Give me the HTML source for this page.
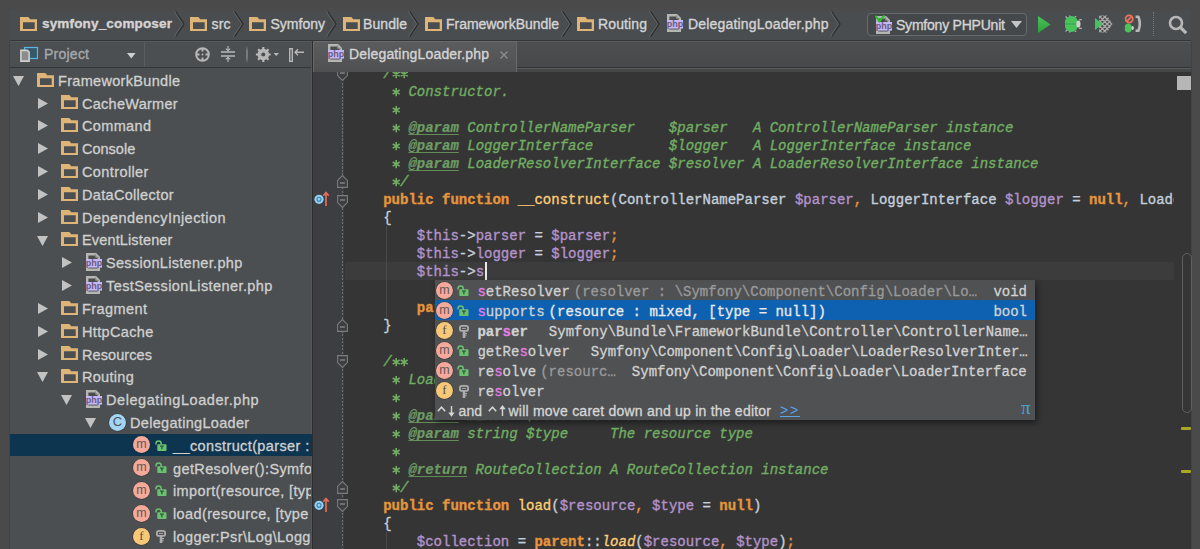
<!DOCTYPE html><html><head><meta charset="utf-8"><style>
*{margin:0;padding:0;box-sizing:border-box}
html,body{width:1200px;height:549px;overflow:hidden;background:#4a4a4a;}
body{position:relative;font-family:"Liberation Sans",sans-serif;}
.a{position:absolute}
svg{position:absolute;overflow:visible}
.nt{position:absolute;font-size:14px;color:#d4d4d4;white-space:pre;line-height:16px;-webkit-text-stroke:0.35px currentColor}
.tt{position:absolute;font-size:14.5px;color:#d0d0d0;white-space:pre;line-height:18px;-webkit-text-stroke:0.3px currentColor}
.code{position:absolute;font-family:"Liberation Mono",monospace;font-size:14px;line-height:18px;white-space:pre;color:#c4d0dc;-webkit-text-stroke:0.35px currentColor}
.k{color:#e5953d;font-weight:bold}
.f{color:#fccd78}
.v{color:#b393cb}
.o{color:#e5953d}
.d{color:#71ae63;font-style:italic}
.dt{color:#6d9c64;font-style:italic;font-weight:bold;text-decoration:underline;text-decoration-color:#628c59;text-decoration-thickness:1.3px;text-underline-offset:1.6px;text-decoration-skip-ink:none;-webkit-text-stroke:0.2px currentColor}
.pt{position:absolute;font-family:"Liberation Mono",monospace;font-size:14px;line-height:20px;white-space:pre;color:#d2d2d2;-webkit-text-stroke:0.3px currentColor}
.hl{color:#e77ee7}
.ast{display:inline-block;width:8.4px;height:18px;vertical-align:top;position:relative}
.ast svg{left:0;top:0}
.gr{color:#9a9a9a}
</style></head><body>
<div class="a" style="left:10px;top:10px;width:1181px;height:30px;background:#4a4d50"></div>
<div class="a" style="left:10px;top:40px;width:1181px;height:1px;background:#343537"></div>
<svg style="left:20px;top:17px" width="17" height="14" viewBox="0 0 17 14"><path fill-rule="evenodd" d="M0 0 H8.3 L10.3 2.2 H17 V14 H0 Z M3 5.2 V12 H14.7 V5.2 Z" fill="#deb477"/></svg>
<div class="nt" style="left:42px;top:16px;font-weight:bold;font-size:13.5px;letter-spacing:0.16px">symfony_composer</div>
<svg style="left:189.5px;top:17px" width="17" height="14" viewBox="0 0 17 14"><path fill-rule="evenodd" d="M0 0 H8.3 L10.3 2.2 H17 V14 H0 Z M3 5.2 V12 H14.7 V5.2 Z" fill="#deb477"/></svg>
<div class="nt" style="left:211.5px;top:16px;letter-spacing:0.16px">src</div>
<svg style="left:249px;top:17px" width="17" height="14" viewBox="0 0 17 14"><path fill-rule="evenodd" d="M0 0 H8.3 L10.3 2.2 H17 V14 H0 Z M3 5.2 V12 H14.7 V5.2 Z" fill="#deb477"/></svg>
<div class="nt" style="left:270.5px;top:16px;letter-spacing:0px">Symfony</div>
<svg style="left:342.5px;top:17px" width="17" height="14" viewBox="0 0 17 14"><path fill-rule="evenodd" d="M0 0 H8.3 L10.3 2.2 H17 V14 H0 Z M3 5.2 V12 H14.7 V5.2 Z" fill="#deb477"/></svg>
<div class="nt" style="left:363px;top:16px;letter-spacing:0.08px">Bundle</div>
<svg style="left:424.5px;top:17px" width="17" height="14" viewBox="0 0 17 14"><path fill-rule="evenodd" d="M0 0 H8.3 L10.3 2.2 H17 V14 H0 Z M3 5.2 V12 H14.7 V5.2 Z" fill="#deb477"/></svg>
<div class="nt" style="left:446px;top:16px;letter-spacing:-0.04px">FrameworkBundle</div>
<svg style="left:576.5px;top:17px" width="17" height="14" viewBox="0 0 17 14"><path fill-rule="evenodd" d="M0 0 H8.3 L10.3 2.2 H17 V14 H0 Z M3 5.2 V12 H14.7 V5.2 Z" fill="#deb477"/></svg>
<div class="nt" style="left:598px;top:16px;letter-spacing:0.12px">Routing</div>
<svg style="left:666.5px;top:14.3px" width="16" height="18" viewBox="0 0 16 18"><path d="M1.2 1.2 H9.6 L12.8 4.4 V16.8 H1.2 Z" fill="#4a4c4e" stroke="#b6b6b2" stroke-width="2.4"/><path d="M9.6 1.2 V4.4 H12.8" fill="none" stroke="#8a8a88" stroke-width="1"/><rect x="0" y="6" width="16" height="8.6" fill="#c6b8f6"/><text x="8" y="12.9" font-family="Liberation Sans" font-size="9" font-weight="bold" fill="#6a5a80" text-anchor="middle">php</text></svg>
<div class="nt" style="left:688px;top:16px;letter-spacing:0.18px">DelegatingLoader.php</div>
<svg style="left:174.7px;top:11px" width="10" height="26" viewBox="0 0 10 26"><path d="M-0.6 0.5 L7.6 13 L-0.6 25.5" fill="none" stroke="#666869" stroke-width="1"/><path d="M0.8 0.5 L9 13 L0.8 25.5" fill="none" stroke="#2b2c2d" stroke-width="1.2"/></svg>
<svg style="left:233.5px;top:11px" width="10" height="26" viewBox="0 0 10 26"><path d="M-0.6 0.5 L7.6 13 L-0.6 25.5" fill="none" stroke="#666869" stroke-width="1"/><path d="M0.8 0.5 L9 13 L0.8 25.5" fill="none" stroke="#2b2c2d" stroke-width="1.2"/></svg>
<svg style="left:326.7px;top:11px" width="10" height="26" viewBox="0 0 10 26"><path d="M-0.6 0.5 L7.6 13 L-0.6 25.5" fill="none" stroke="#666869" stroke-width="1"/><path d="M0.8 0.5 L9 13 L0.8 25.5" fill="none" stroke="#2b2c2d" stroke-width="1.2"/></svg>
<svg style="left:408.8px;top:11px" width="10" height="26" viewBox="0 0 10 26"><path d="M-0.6 0.5 L7.6 13 L-0.6 25.5" fill="none" stroke="#666869" stroke-width="1"/><path d="M0.8 0.5 L9 13 L0.8 25.5" fill="none" stroke="#2b2c2d" stroke-width="1.2"/></svg>
<svg style="left:561.5px;top:11px" width="10" height="26" viewBox="0 0 10 26"><path d="M-0.6 0.5 L7.6 13 L-0.6 25.5" fill="none" stroke="#666869" stroke-width="1"/><path d="M0.8 0.5 L9 13 L0.8 25.5" fill="none" stroke="#2b2c2d" stroke-width="1.2"/></svg>
<svg style="left:649.8px;top:11px" width="10" height="26" viewBox="0 0 10 26"><path d="M-0.6 0.5 L7.6 13 L-0.6 25.5" fill="none" stroke="#666869" stroke-width="1"/><path d="M0.8 0.5 L9 13 L0.8 25.5" fill="none" stroke="#2b2c2d" stroke-width="1.2"/></svg>
<svg style="left:830.7px;top:11px" width="10" height="26" viewBox="0 0 10 26"><path d="M-0.6 0.5 L7.6 13 L-0.6 25.5" fill="none" stroke="#666869" stroke-width="1"/><path d="M0.8 0.5 L9 13 L0.8 25.5" fill="none" stroke="#2b2c2d" stroke-width="1.2"/></svg>
<div class="a" style="left:867px;top:13px;width:160px;height:23px;border:1px solid #686b6e;border-radius:4px;background:#45484b"></div>
<svg style="left:875.7px;top:15.5px" width="16" height="18" viewBox="0 0 16 18"><path d="M1.2 1.2 H9.6 L12.8 4.4 V16.8 H1.2 Z" fill="#4a4c4e" stroke="#b6b6b2" stroke-width="2.4"/><path d="M9.6 1.2 V4.4 H12.8" fill="none" stroke="#8a8a88" stroke-width="1"/><rect x="0" y="6" width="16" height="8.6" fill="#c6b8f6"/><text x="8" y="12.9" font-family="Liberation Sans" font-size="9" font-weight="bold" fill="#6a5a80" text-anchor="middle">php</text></svg>
<svg style="left:874.5px;top:14.5px" width="11" height="8" viewBox="0 0 11 8"><path d="M0.6 0.8 L4.4 6.4 L9.4 0.4" fill="none" stroke="#22c42e" stroke-width="2"/></svg>
<div class="nt" style="left:896px;top:16.5px;letter-spacing:-0.22px">Symfony PHPUnit</div>
<svg style="left:1011px;top:21px" width="11" height="7"><path d="M0 0 H11 L5.5 7 Z" fill="#c4c4c4"/></svg>
<svg style="left:1038px;top:15.5px" width="13" height="17"><defs><linearGradient id="gg" x1="0" y1="0" x2="0" y2="1"><stop offset="0" stop-color="#49c45a"/><stop offset="1" stop-color="#2f9e3e"/></linearGradient></defs><path d="M0 0 L12.5 8.5 L0 17 Z" fill="url(#gg)"/></svg>
<svg style="left:1064px;top:14px" width="20" height="20" viewBox="0 0 20 20"><path d="M3.5 4.5 Q2.5 3 1.5 2.6 M6.5 3.6 L5.5 1.4 M10 4.2 Q11 2.6 12.3 2.2 M3.5 15.5 Q2.5 17 1.5 17.4 M6.5 16.4 L5.5 18.6 M10 15.8 Q11 17.4 12.3 17.8 M15 6 Q16.6 5.2 17.8 5.8 M15 14 Q16.6 14.8 17.8 14.2" fill="none" stroke="#b8b8b8" stroke-width="1.2"/><path d="M1.2 10 A6.4 6 0 0 1 13.6 6.4 V13.6 A6.4 6 0 0 1 1.2 10 Z" fill="#48c25a"/><path d="M1.4 10 H13" stroke="#36964a" stroke-width="0.7"/><ellipse cx="14.4" cy="10" rx="2.1" ry="3.6" fill="#cfcfcf"/></svg>
<svg style="left:1094px;top:15px" width="20" height="18" viewBox="0 0 20 18"><defs><clipPath id="mc"><path d="M5 0.5 H13 L18.5 9 L13 17.5 H5 Z"/></clipPath></defs><g clip-path="url(#mc)" stroke="#a8a8a8" stroke-width="1.3" fill="none"><path d="M-10 18 L8 0 M-5.3 18 L12.7 0 M-0.6 18 L17.4 0 M4.1 18 L22.1 0 M8.8 18 L26.8 0 M-10 0 L8 18 M-5.3 0 L12.7 18 M-0.6 0 L17.4 18 M4.1 0 L22.1 18 M8.8 0 L26.8 18"/></g><path d="M1 3 L8.6 9 L1 15 Z" fill="#45c35a"/></svg>
<svg style="left:1124px;top:14px" width="20" height="20" viewBox="0 0 20 20"><circle cx="5.2" cy="5" r="3.6" fill="none" stroke="#ef735c" stroke-width="1.7"/><path d="M2.6 7.6 L7.8 2.4" stroke="#ef735c" stroke-width="1.7"/><path d="M1 14 A3.4 3.4 0 0 1 7.6 12.2 V16 A3.4 3.4 0 0 1 1 14 Z" fill="#4cc25b"/><ellipse cx="8.6" cy="14" rx="1.3" ry="1.9" fill="#d0d0d0"/><path d="M11.6 2.8 H14.4 Q17.2 9.5 14.4 16.8 H11.6" fill="none" stroke="#b8b8b8" stroke-width="2.6" stroke-linejoin="round"/></svg>
<div class="a" style="left:1153px;top:12px;width:1px;height:24px;border-left:1px dotted #7a7a7a"></div>
<svg style="left:1168px;top:15px" width="20" height="20" viewBox="0 0 20 20"><circle cx="8" cy="8" r="6" fill="none" stroke="#b8b8b8" stroke-width="2.6"/><path d="M12.4 12.4 L18.2 18.2" stroke="#b8b8b8" stroke-width="3.2"/></svg>
<div class="a" style="left:0px;top:41px;width:9px;height:508px;background:#4a4a4b"></div>
<div class="a" style="left:9px;top:41px;width:1px;height:508px;background:#424344"></div>
<div class="a" style="left:10px;top:41px;width:302px;height:508px;background:#4b4f51"></div>
<div class="a" style="left:10px;top:41px;width:302px;height:1px;background:#585b5d"></div>
<div class="a" style="left:10px;top:67px;width:302px;height:1px;background:#343537"></div>
<div class="a" style="left:311px;top:41px;width:1px;height:508px;background:#545658"></div>
<div class="a" style="left:312px;top:41px;width:1px;height:508px;background:#2c2d2e"></div>
<svg style="left:20px;top:46.5px" width="18" height="15" viewBox="0 0 18 15"><rect x="4.5" y="0.5" width="13" height="11" fill="#37596b" stroke="#5ab6e8" stroke-width="1.2"/><path d="M0.9 3.4 H7.4 L9.1 5.1 V14.1 H0.9 Z" fill="#8c8c8c" stroke="#cfcfcf" stroke-width="1.6"/></svg>
<div class="nt" style="left:44px;top:46px;color:#a4a8ac;font-size:14px;letter-spacing:0.24px">Project</div>
<svg style="left:126.5px;top:52.5px" width="9" height="6"><path d="M0 0 H8.6 L4.3 5.4 Z" fill="#cfcfcf"/></svg>
<div class="a" style="left:144px;top:42px;width:1px;height:25px;background:#5a5d60"></div>
<svg style="left:194.5px;top:46.5px" width="15" height="15" viewBox="0 0 15 15"><circle cx="7.5" cy="7.5" r="6.3" fill="none" stroke="#b8b8b8" stroke-width="2"/><path d="M7.5 1 V4.5 M7.5 10.5 V14 M1 7.5 H4.5 M10.5 7.5 H14" stroke="#b8b8b8" stroke-width="2"/><circle cx="7.5" cy="7.5" r="1" fill="#b8b8b8"/></svg>
<svg style="left:221px;top:46px" width="14" height="16" viewBox="0 0 14 16"><path d="M0 6 H14 M0 10 H14" stroke="#b8b8b8" stroke-width="1.5"/><path d="M7 0 V4.5 M4.8 2.6 L7 4.8 L9.2 2.6 M7 16 V11.5 M4.8 13.4 L7 11.2 L9.2 13.4" stroke="#b8b8b8" stroke-width="1.1" fill="none"/></svg>
<div class="a" style="left:245.5px;top:46px;width:2px;height:17px;background:linear-gradient(rgba(120,120,120,0),#7a7a7a 30%,#7a7a7a 70%,rgba(120,120,120,0))"></div>
<svg style="left:255.5px;top:46.5px" width="24" height="15" viewBox="0 0 24 15"><g transform="translate(7.3 7.5)"><circle r="4.4" fill="none" stroke="#b8b8b8" stroke-width="2.8"/><path d="M0 -7.4 V7.4 M-7.4 0 H7.4 M-5.2 -5.2 L5.2 5.2 M5.2 -5.2 L-5.2 5.2" stroke="#b8b8b8" stroke-width="2.2"/><circle r="2" fill="#4b4f51"/></g><path d="M17.5 6 H23 L20.25 9 Z" fill="#b8b8b8"/></svg>
<svg style="left:289px;top:47.5px" width="16" height="14" viewBox="0 0 16 14"><rect x="0.7" y="0.7" width="2.6" height="12.6" fill="none" stroke="#b8b8b8" stroke-width="1.4"/><path d="M6 4.3 H15 M9 1.3 L6 4.3 L9 7.3" stroke="#b8b8b8" stroke-width="1.4" fill="none"/></svg>
<div class="a" style="left:10px;top:433.52px;width:302px;height:22.82px;background:#0e3550"></div>
<div class="a" style="left:0px;top:68px;width:311px;height:481px;overflow:hidden">
<svg style="left:13px;top:7.81px" width="11" height="10"><path d="M0 0 H11 L5.5 10 Z" fill="#c2c2c2"/></svg>
<svg style="left:37px;top:4.61px" width="17" height="14" viewBox="0 0 17 14"><path fill-rule="evenodd" d="M0 0 H8.3 L10.3 2.2 H17 V14 H0 Z M3 5.2 V12 H14.7 V5.2 Z" fill="#deb477"/></svg>
<div class="tt" style="left:58px;top:3.71px;letter-spacing:0.309px">FrameworkBundle</div>
<svg style="left:38px;top:29.63px" width="10" height="11"><path d="M0 0 L10 5.5 L0 11 Z" fill="#c2c2c2"/></svg>
<svg style="left:61px;top:27.43px" width="17" height="14" viewBox="0 0 17 14"><path fill-rule="evenodd" d="M0 0 H8.3 L10.3 2.2 H17 V14 H0 Z M3 5.2 V12 H14.7 V5.2 Z" fill="#deb477"/></svg>
<div class="tt" style="left:82px;top:26.53px;letter-spacing:0.266px">CacheWarmer</div>
<svg style="left:38px;top:52.45px" width="10" height="11"><path d="M0 0 L10 5.5 L0 11 Z" fill="#c2c2c2"/></svg>
<svg style="left:61px;top:50.25px" width="17" height="14" viewBox="0 0 17 14"><path fill-rule="evenodd" d="M0 0 H8.3 L10.3 2.2 H17 V14 H0 Z M3 5.2 V12 H14.7 V5.2 Z" fill="#deb477"/></svg>
<div class="tt" style="left:82px;top:49.35px;letter-spacing:0.352px">Command</div>
<svg style="left:38px;top:75.27px" width="10" height="11"><path d="M0 0 L10 5.5 L0 11 Z" fill="#c2c2c2"/></svg>
<svg style="left:61px;top:73.07px" width="17" height="14" viewBox="0 0 17 14"><path fill-rule="evenodd" d="M0 0 H8.3 L10.3 2.2 H17 V14 H0 Z M3 5.2 V12 H14.7 V5.2 Z" fill="#deb477"/></svg>
<div class="tt" style="left:82px;top:72.17px;letter-spacing:0.0px">Console</div>
<svg style="left:38px;top:98.09px" width="10" height="11"><path d="M0 0 L10 5.5 L0 11 Z" fill="#c2c2c2"/></svg>
<svg style="left:61px;top:95.89px" width="17" height="14" viewBox="0 0 17 14"><path fill-rule="evenodd" d="M0 0 H8.3 L10.3 2.2 H17 V14 H0 Z M3 5.2 V12 H14.7 V5.2 Z" fill="#deb477"/></svg>
<div class="tt" style="left:82px;top:94.99px;letter-spacing:0.393px">Controller</div>
<svg style="left:38px;top:120.91px" width="10" height="11"><path d="M0 0 L10 5.5 L0 11 Z" fill="#c2c2c2"/></svg>
<svg style="left:61px;top:118.71px" width="17" height="14" viewBox="0 0 17 14"><path fill-rule="evenodd" d="M0 0 H8.3 L10.3 2.2 H17 V14 H0 Z M3 5.2 V12 H14.7 V5.2 Z" fill="#deb477"/></svg>
<div class="tt" style="left:82px;top:117.81px;letter-spacing:0.313px">DataCollector</div>
<svg style="left:38px;top:143.73px" width="10" height="11"><path d="M0 0 L10 5.5 L0 11 Z" fill="#c2c2c2"/></svg>
<svg style="left:61px;top:141.53px" width="17" height="14" viewBox="0 0 17 14"><path fill-rule="evenodd" d="M0 0 H8.3 L10.3 2.2 H17 V14 H0 Z M3 5.2 V12 H14.7 V5.2 Z" fill="#deb477"/></svg>
<div class="tt" style="left:82px;top:140.63px;letter-spacing:0.453px">DependencyInjection</div>
<svg style="left:37px;top:167.55px" width="11" height="10"><path d="M0 0 H11 L5.5 10 Z" fill="#c2c2c2"/></svg>
<svg style="left:61px;top:164.35px" width="17" height="14" viewBox="0 0 17 14"><path fill-rule="evenodd" d="M0 0 H8.3 L10.3 2.2 H17 V14 H0 Z M3 5.2 V12 H14.7 V5.2 Z" fill="#deb477"/></svg>
<div class="tt" style="left:82px;top:163.45px;letter-spacing:0.144px">EventListener</div>
<svg style="left:62px;top:189.37px" width="10" height="11"><path d="M0 0 L10 5.5 L0 11 Z" fill="#c2c2c2"/></svg>
<svg style="left:86px;top:185.17px" width="16" height="18" viewBox="0 0 16 18"><path d="M1.2 1.2 H9.6 L12.8 4.4 V16.8 H1.2 Z" fill="#4a4c4e" stroke="#b6b6b2" stroke-width="2.4"/><path d="M9.6 1.2 V4.4 H12.8" fill="none" stroke="#8a8a88" stroke-width="1"/><rect x="0" y="6" width="16" height="8.6" fill="#c6b8f6"/><text x="8" y="12.9" font-family="Liberation Sans" font-size="9" font-weight="bold" fill="#6a5a80" text-anchor="middle">php</text></svg>
<div class="tt" style="left:106px;top:186.27px;letter-spacing:0.311px">SessionListener.php</div>
<svg style="left:62px;top:212.19px" width="10" height="11"><path d="M0 0 L10 5.5 L0 11 Z" fill="#c2c2c2"/></svg>
<svg style="left:86px;top:207.99px" width="16" height="18" viewBox="0 0 16 18"><path d="M1.2 1.2 H9.6 L12.8 4.4 V16.8 H1.2 Z" fill="#4a4c4e" stroke="#b6b6b2" stroke-width="2.4"/><path d="M9.6 1.2 V4.4 H12.8" fill="none" stroke="#8a8a88" stroke-width="1"/><rect x="0" y="6" width="16" height="8.6" fill="#c6b8f6"/><text x="8" y="12.9" font-family="Liberation Sans" font-size="9" font-weight="bold" fill="#6a5a80" text-anchor="middle">php</text></svg>
<div class="tt" style="left:106px;top:209.09px;letter-spacing:0.419px">TestSessionListener.php</div>
<svg style="left:38px;top:235.01px" width="10" height="11"><path d="M0 0 L10 5.5 L0 11 Z" fill="#c2c2c2"/></svg>
<svg style="left:61px;top:232.81px" width="17" height="14" viewBox="0 0 17 14"><path fill-rule="evenodd" d="M0 0 H8.3 L10.3 2.2 H17 V14 H0 Z M3 5.2 V12 H14.7 V5.2 Z" fill="#deb477"/></svg>
<div class="tt" style="left:82px;top:231.91px;letter-spacing:0.42px">Fragment</div>
<svg style="left:38px;top:257.83px" width="10" height="11"><path d="M0 0 L10 5.5 L0 11 Z" fill="#c2c2c2"/></svg>
<svg style="left:61px;top:255.63px" width="17" height="14" viewBox="0 0 17 14"><path fill-rule="evenodd" d="M0 0 H8.3 L10.3 2.2 H17 V14 H0 Z M3 5.2 V12 H14.7 V5.2 Z" fill="#deb477"/></svg>
<div class="tt" style="left:82px;top:254.73px;letter-spacing:0.348px">HttpCache</div>
<svg style="left:38px;top:280.65px" width="10" height="11"><path d="M0 0 L10 5.5 L0 11 Z" fill="#c2c2c2"/></svg>
<svg style="left:61px;top:278.45px" width="17" height="14" viewBox="0 0 17 14"><path fill-rule="evenodd" d="M0 0 H8.3 L10.3 2.2 H17 V14 H0 Z M3 5.2 V12 H14.7 V5.2 Z" fill="#deb477"/></svg>
<div class="tt" style="left:82px;top:277.55px;letter-spacing:0.086px">Resources</div>
<svg style="left:37px;top:304.47px" width="11" height="10"><path d="M0 0 H11 L5.5 10 Z" fill="#c2c2c2"/></svg>
<svg style="left:61px;top:301.27px" width="17" height="14" viewBox="0 0 17 14"><path fill-rule="evenodd" d="M0 0 H8.3 L10.3 2.2 H17 V14 H0 Z M3 5.2 V12 H14.7 V5.2 Z" fill="#deb477"/></svg>
<div class="tt" style="left:82px;top:300.37px;letter-spacing:0.286px">Routing</div>
<svg style="left:61px;top:327.29px" width="11" height="10"><path d="M0 0 H11 L5.5 10 Z" fill="#c2c2c2"/></svg>
<svg style="left:86px;top:322.09px" width="16" height="18" viewBox="0 0 16 18"><path d="M1.2 1.2 H9.6 L12.8 4.4 V16.8 H1.2 Z" fill="#4a4c4e" stroke="#b6b6b2" stroke-width="2.4"/><path d="M9.6 1.2 V4.4 H12.8" fill="none" stroke="#8a8a88" stroke-width="1"/><rect x="0" y="6" width="16" height="8.6" fill="#c6b8f6"/><text x="8" y="12.9" font-family="Liberation Sans" font-size="9" font-weight="bold" fill="#6a5a80" text-anchor="middle">php</text></svg>
<div class="tt" style="left:106px;top:323.19px;letter-spacing:0.563px">DelegatingLoader.php</div>
<svg style="left:85px;top:350.11px" width="11" height="10"><path d="M0 0 H11 L5.5 10 Z" fill="#c2c2c2"/></svg>
<div class="a" style="left:109px;top:345.51px;width:17px;height:17px;border-radius:50%;background:#a2d5f4;box-shadow:0 0 0 0.6px rgba(30,30,30,0.5);color:#4d5258;font-size:13px;line-height:16px;text-align:center;">C</div>
<div class="tt" style="left:130px;top:346.01px;letter-spacing:0.314px">DelegatingLoader</div>
<div class="a" style="left:133px;top:368.33px;width:17px;height:17px;border-radius:50%;background:#f4a99b;box-shadow:0 0 0 0.6px rgba(30,30,30,0.5);color:#665754;font-size:12.5px;line-height:16px;text-align:center;">m</div>
<svg style="left:155px;top:371.63px" width="12" height="11" viewBox="0 0 12 11"><path d="M1 4.5 V3.5 A2.6 2.6 0 0 1 6.2 3.5 V5" fill="none" stroke="#6cc072" stroke-width="1.5"/><rect x="2.3" y="4.2" width="9.2" height="6.8" rx="0.8" fill="#6cc072"/><path d="M5 6.2 H8.8 M6.9 6.2 V9.2" stroke="#2f5a34" stroke-width="1.3"/></svg>
<div class="tt" style="left:173px;top:368.83px;letter-spacing:0.38px">__construct(parser : ControllerNameParser</div>
<div class="a" style="left:133px;top:391.15px;width:17px;height:17px;border-radius:50%;background:#f4a99b;box-shadow:0 0 0 0.6px rgba(30,30,30,0.5);color:#665754;font-size:12.5px;line-height:16px;text-align:center;">m</div>
<svg style="left:155px;top:394.45px" width="12" height="11" viewBox="0 0 12 11"><path d="M1 4.5 V3.5 A2.6 2.6 0 0 1 6.2 3.5 V5" fill="none" stroke="#6cc072" stroke-width="1.5"/><rect x="2.3" y="4.2" width="9.2" height="6.8" rx="0.8" fill="#6cc072"/><path d="M5 6.2 H8.8 M6.9 6.2 V9.2" stroke="#2f5a34" stroke-width="1.3"/></svg>
<div class="tt" style="left:173px;top:391.65px;letter-spacing:0.38px">getResolver():Symfony\Component</div>
<div class="a" style="left:133px;top:413.97px;width:17px;height:17px;border-radius:50%;background:#f4a99b;box-shadow:0 0 0 0.6px rgba(30,30,30,0.5);color:#665754;font-size:12.5px;line-height:16px;text-align:center;">m</div>
<svg style="left:155px;top:417.27px" width="12" height="11" viewBox="0 0 12 11"><path d="M1 4.5 V3.5 A2.6 2.6 0 0 1 6.2 3.5 V5" fill="none" stroke="#6cc072" stroke-width="1.5"/><rect x="2.3" y="4.2" width="9.2" height="6.8" rx="0.8" fill="#6cc072"/><path d="M5 6.2 H8.8 M6.9 6.2 V9.2" stroke="#2f5a34" stroke-width="1.3"/></svg>
<div class="tt" style="left:173px;top:414.47px;letter-spacing:0.38px">import(resource, [type = null])</div>
<div class="a" style="left:133px;top:436.79px;width:17px;height:17px;border-radius:50%;background:#f4a99b;box-shadow:0 0 0 0.6px rgba(30,30,30,0.5);color:#665754;font-size:12.5px;line-height:16px;text-align:center;">m</div>
<svg style="left:155px;top:440.09px" width="12" height="11" viewBox="0 0 12 11"><path d="M1 4.5 V3.5 A2.6 2.6 0 0 1 6.2 3.5 V5" fill="none" stroke="#6cc072" stroke-width="1.5"/><rect x="2.3" y="4.2" width="9.2" height="6.8" rx="0.8" fill="#6cc072"/><path d="M5 6.2 H8.8 M6.9 6.2 V9.2" stroke="#2f5a34" stroke-width="1.3"/></svg>
<div class="tt" style="left:173px;top:437.29px;letter-spacing:0.38px">load(resource, [type = null])</div>
<div class="a" style="left:133px;top:459.61px;width:17px;height:17px;border-radius:50%;background:#f7c878;box-shadow:0 0 0 0.6px rgba(30,30,30,0.5);color:#5a5040;font-size:13px;line-height:16px;text-align:center;font-family:Liberation Serif;">f</div>
<svg style="left:156px;top:461.71px" width="10" height="14" viewBox="0 0 10 14"><rect x="0.9" y="0.9" width="8.2" height="5" rx="2" fill="#4f5153" stroke="#acacac" stroke-width="1.8"/><path d="M3 3.4 H7" stroke="#acacac" stroke-width="1"/><path d="M5 5.5 V13" stroke="#acacac" stroke-width="2.6"/><path d="M6 8.6 H8 M6 10.8 H7.6" stroke="#acacac" stroke-width="1.1"/></svg>
<div class="tt" style="left:173px;top:460.11px;letter-spacing:0.38px">logger:Psr\Log\LoggerInterface</div>
</div>
<div class="a" style="left:313px;top:41px;width:878px;height:31px;background:linear-gradient(#4d4e4f,#474849)"></div>
<div class="a" style="left:313px;top:41px;width:878px;height:1px;background:#5a5c5e"></div>
<div class="a" style="left:313px;top:67px;width:878px;height:1px;background:#343537"></div>
<div class="a" style="left:313px;top:68px;width:878px;height:1px;background:#5a5c5e"></div>
<div class="a" style="left:313px;top:69px;width:878px;height:3px;background:#454646"></div>
<div class="a" style="left:313px;top:41px;width:204px;height:31px;background:linear-gradient(#5b5c5d,#4f5051);border:1px solid #686a6c;border-bottom:none"></div>
<svg style="left:328px;top:44.2px" width="16" height="18" viewBox="0 0 16 18"><path d="M1.2 1.2 H9.6 L12.8 4.4 V16.8 H1.2 Z" fill="#4a4c4e" stroke="#b6b6b2" stroke-width="2.4"/><path d="M9.6 1.2 V4.4 H12.8" fill="none" stroke="#8a8a88" stroke-width="1"/><rect x="0" y="6" width="16" height="8.6" fill="#c6b8f6"/><text x="8" y="12.9" font-family="Liberation Sans" font-size="9" font-weight="bold" fill="#6a5a80" text-anchor="middle">php</text></svg>
<div class="nt" style="left:349px;top:46px;letter-spacing:0.16px">DelegatingLoader.php</div>
<svg style="left:499.5px;top:50.5px" width="8" height="8"><path d="M0.5 0.5 L7.5 7.5 M7.5 0.5 L0.5 7.5" stroke="#8e8e8e" stroke-width="1.3"/></svg>
<div class="a" style="left:313px;top:72px;width:878px;height:477px;background:#353535"></div>
<div class="a" style="left:313px;top:72px;width:31px;height:477px;background:#3d3e41"></div>
<div class="a" style="left:345px;top:262px;width:829px;height:18px;background:#3c3c3c"></div>
<div class="a" style="left:1191px;top:41px;width:9px;height:508px;background:#4a4a4a"></div>
<div class="a" style="left:1191px;top:41px;width:1px;height:508px;background:#434343"></div>
<div class="a" style="left:342px;top:72px;width:1.2px;height:477px;background:repeating-linear-gradient(#707070 0 2px,transparent 2px 3.5px)"></div>
<div class="a" style="left:386px;top:226px;width:1px;height:91px;background:#4a4a4a"></div>
<div class="a" style="left:386px;top:532px;width:1px;height:17px;background:#4a4a4a"></div>
<div class="a" style="left:0;top:72px;width:1200px;height:477px;overflow:hidden">
<svg style="left:337px;top:-4px" width="11" height="13" viewBox="0 0 11 13"><path d="M0.6 0.6 H10.4 V7.6 L5.5 12.4 L0.6 7.6 Z" fill="#3d3e41" stroke="#7c7c7c" stroke-width="1.1"/><path d="M3 5 H8" stroke="#8c8c8c" stroke-width="1.3"/></svg>
<svg style="left:337px;top:103px" width="11" height="13" viewBox="0 0 11 13"><path d="M0.6 12.4 H10.4 V5.4 L5.5 0.6 L0.6 5.4 Z" fill="#3d3e41" stroke="#7c7c7c" stroke-width="1.1"/><path d="M3 8 H8" stroke="#8c8c8c" stroke-width="1.3"/></svg>
<svg style="left:337px;top:122.5px" width="11" height="13" viewBox="0 0 11 13"><path d="M0.6 0.6 H10.4 V7.6 L5.5 12.4 L0.6 7.6 Z" fill="#3d3e41" stroke="#7c7c7c" stroke-width="1.1"/><path d="M3 5 H8" stroke="#8c8c8c" stroke-width="1.3"/></svg>
<svg style="left:337px;top:247px" width="11" height="13" viewBox="0 0 11 13"><path d="M0.6 12.4 H10.4 V5.4 L5.5 0.6 L0.6 5.4 Z" fill="#3d3e41" stroke="#7c7c7c" stroke-width="1.1"/><path d="M3 8 H8" stroke="#8c8c8c" stroke-width="1.3"/></svg>
<svg style="left:337px;top:283px" width="11" height="13" viewBox="0 0 11 13"><path d="M0.6 0.6 H10.4 V7.6 L5.5 12.4 L0.6 7.6 Z" fill="#3d3e41" stroke="#7c7c7c" stroke-width="1.1"/><path d="M3 5 H8" stroke="#8c8c8c" stroke-width="1.3"/></svg>
<svg style="left:337px;top:409px" width="11" height="13" viewBox="0 0 11 13"><path d="M0.6 12.4 H10.4 V5.4 L5.5 0.6 L0.6 5.4 Z" fill="#3d3e41" stroke="#7c7c7c" stroke-width="1.1"/><path d="M3 8 H8" stroke="#8c8c8c" stroke-width="1.3"/></svg>
<svg style="left:337px;top:427px" width="11" height="13" viewBox="0 0 11 13"><path d="M0.6 0.6 H10.4 V7.6 L5.5 12.4 L0.6 7.6 Z" fill="#3d3e41" stroke="#7c7c7c" stroke-width="1.1"/><path d="M3 5 H8" stroke="#8c8c8c" stroke-width="1.3"/></svg>
</div>
<svg style="left:314px;top:191px" width="15" height="15" viewBox="0 0 15 15"><circle cx="5" cy="8.3" r="4.6" fill="#8fd0f4"/><circle cx="5" cy="8.3" r="2" fill="none" stroke="#3f7ea0" stroke-width="1.1"/><path d="M12 15 V2 M9.3 4.8 L12 1.6 L14.7 4.8" fill="none" stroke="#e26c58" stroke-width="1.7"/></svg>
<svg style="left:314px;top:497px" width="15" height="15" viewBox="0 0 15 15"><circle cx="5" cy="8.3" r="4.6" fill="#8fd0f4"/><circle cx="5" cy="8.3" r="2" fill="none" stroke="#3f7ea0" stroke-width="1.1"/><path d="M12 15 V2 M9.3 4.8 L12 1.6 L14.7 4.8" fill="none" stroke="#e26c58" stroke-width="1.7"/></svg>
<div class="a" style="left:313px;top:72px;width:861px;height:477px;overflow:hidden">
<div class="code" style="left:36.6px;top:-7px"><span class="d">    /<span class="ast"><svg width="8.4" height="18" viewBox="0 0 8.4 18"><path d="M4.2 5 V13.2 M0.7 7.05 L7.7 11.15 M7.7 7.05 L0.7 11.15" stroke="currentColor" stroke-width="1.6"/></svg></span><span class="ast"><svg width="8.4" height="18" viewBox="0 0 8.4 18"><path d="M4.2 5 V13.2 M0.7 7.05 L7.7 11.15 M7.7 7.05 L0.7 11.15" stroke="currentColor" stroke-width="1.6"/></svg></span></span></div>
<div class="code" style="left:36.6px;top:11px"><span class="d">     <span class="ast"><svg width="8.4" height="18" viewBox="0 0 8.4 18"><path d="M4.2 5 V13.2 M0.7 7.05 L7.7 11.15 M7.7 7.05 L0.7 11.15" stroke="currentColor" stroke-width="1.6"/></svg></span> Constructor.</span></div>
<div class="code" style="left:36.6px;top:29px"><span class="d">     <span class="ast"><svg width="8.4" height="18" viewBox="0 0 8.4 18"><path d="M4.2 5 V13.2 M0.7 7.05 L7.7 11.15 M7.7 7.05 L0.7 11.15" stroke="currentColor" stroke-width="1.6"/></svg></span></span></div>
<div class="code" style="left:36.6px;top:47px"><span class="d">     <span class="ast"><svg width="8.4" height="18" viewBox="0 0 8.4 18"><path d="M4.2 5 V13.2 M0.7 7.05 L7.7 11.15 M7.7 7.05 L0.7 11.15" stroke="currentColor" stroke-width="1.6"/></svg></span> </span><span class="dt">@param</span><span class="d"> ControllerNameParser    $parser   A ControllerNameParser instance</span></div>
<div class="code" style="left:36.6px;top:65px"><span class="d">     <span class="ast"><svg width="8.4" height="18" viewBox="0 0 8.4 18"><path d="M4.2 5 V13.2 M0.7 7.05 L7.7 11.15 M7.7 7.05 L0.7 11.15" stroke="currentColor" stroke-width="1.6"/></svg></span> </span><span class="dt">@param</span><span class="d"> LoggerInterface         $logger   A LoggerInterface instance</span></div>
<div class="code" style="left:36.6px;top:83px"><span class="d">     <span class="ast"><svg width="8.4" height="18" viewBox="0 0 8.4 18"><path d="M4.2 5 V13.2 M0.7 7.05 L7.7 11.15 M7.7 7.05 L0.7 11.15" stroke="currentColor" stroke-width="1.6"/></svg></span> </span><span class="dt">@param</span><span class="d"> LoaderResolverInterface $resolver A LoaderResolverInterface instance</span></div>
<div class="code" style="left:36.6px;top:101px"><span class="d">     <span class="ast"><svg width="8.4" height="18" viewBox="0 0 8.4 18"><path d="M4.2 5 V13.2 M0.7 7.05 L7.7 11.15 M7.7 7.05 L0.7 11.15" stroke="currentColor" stroke-width="1.6"/></svg></span>/</span></div>
<div class="code" style="left:36.6px;top:119px">    <span class="k">public</span> <span class="k">function</span> <span class="f">__construct</span>(ControllerNameParser <span class="v">$parser</span><span class="o">,</span> LoggerInterface <span class="v">$logger</span> = <span class="k">null</span><span class="o">,</span> LoaderResolverInterface <span class="v">$resolver</span>)</div>
<div class="code" style="left:36.6px;top:137px">    {</div>
<div class="code" style="left:36.6px;top:155px">        <span class="v">$this</span>-><span class="v">parser</span> = <span class="v">$parser</span><span class="o">;</span></div>
<div class="code" style="left:36.6px;top:173px">        <span class="v">$this</span>-><span class="v">logger</span> = <span class="v">$logger</span><span class="o">;</span></div>
<div class="code" style="left:36.6px;top:191px">        <span class="v">$this</span>-><span class="v">s</span></div>
<div class="code" style="left:36.6px;top:227px">        <span class="k">parent</span>::<span class="f">__construct</span>(<span class="v">$resolver</span>)<span class="o">;</span></div>
<div class="code" style="left:36.6px;top:245px">    }</div>
<div class="code" style="left:36.6px;top:281px"><span class="d">    /<span class="ast"><svg width="8.4" height="18" viewBox="0 0 8.4 18"><path d="M4.2 5 V13.2 M0.7 7.05 L7.7 11.15 M7.7 7.05 L0.7 11.15" stroke="currentColor" stroke-width="1.6"/></svg></span><span class="ast"><svg width="8.4" height="18" viewBox="0 0 8.4 18"><path d="M4.2 5 V13.2 M0.7 7.05 L7.7 11.15 M7.7 7.05 L0.7 11.15" stroke="currentColor" stroke-width="1.6"/></svg></span></span></div>
<div class="code" style="left:36.6px;top:299px"><span class="d">     <span class="ast"><svg width="8.4" height="18" viewBox="0 0 8.4 18"><path d="M4.2 5 V13.2 M0.7 7.05 L7.7 11.15 M7.7 7.05 L0.7 11.15" stroke="currentColor" stroke-width="1.6"/></svg></span> Loads a Symfony resource.</span></div>
<div class="code" style="left:36.6px;top:317px"><span class="d">     <span class="ast"><svg width="8.4" height="18" viewBox="0 0 8.4 18"><path d="M4.2 5 V13.2 M0.7 7.05 L7.7 11.15 M7.7 7.05 L0.7 11.15" stroke="currentColor" stroke-width="1.6"/></svg></span></span></div>
<div class="code" style="left:36.6px;top:335px"><span class="d">     <span class="ast"><svg width="8.4" height="18" viewBox="0 0 8.4 18"><path d="M4.2 5 V13.2 M0.7 7.05 L7.7 11.15 M7.7 7.05 L0.7 11.15" stroke="currentColor" stroke-width="1.6"/></svg></span> </span><span class="dt">@param</span><span class="d"> mixed  $resource A resource</span></div>
<div class="code" style="left:36.6px;top:353px"><span class="d">     <span class="ast"><svg width="8.4" height="18" viewBox="0 0 8.4 18"><path d="M4.2 5 V13.2 M0.7 7.05 L7.7 11.15 M7.7 7.05 L0.7 11.15" stroke="currentColor" stroke-width="1.6"/></svg></span> </span><span class="dt">@param</span><span class="d"> string $type     The resource type</span></div>
<div class="code" style="left:36.6px;top:371px"><span class="d">     <span class="ast"><svg width="8.4" height="18" viewBox="0 0 8.4 18"><path d="M4.2 5 V13.2 M0.7 7.05 L7.7 11.15 M7.7 7.05 L0.7 11.15" stroke="currentColor" stroke-width="1.6"/></svg></span></span></div>
<div class="code" style="left:36.6px;top:389px"><span class="d">     <span class="ast"><svg width="8.4" height="18" viewBox="0 0 8.4 18"><path d="M4.2 5 V13.2 M0.7 7.05 L7.7 11.15 M7.7 7.05 L0.7 11.15" stroke="currentColor" stroke-width="1.6"/></svg></span> </span><span class="dt">@return</span><span class="d"> RouteCollection A RouteCollection instance</span></div>
<div class="code" style="left:36.6px;top:407px"><span class="d">     <span class="ast"><svg width="8.4" height="18" viewBox="0 0 8.4 18"><path d="M4.2 5 V13.2 M0.7 7.05 L7.7 11.15 M7.7 7.05 L0.7 11.15" stroke="currentColor" stroke-width="1.6"/></svg></span>/</span></div>
<div class="code" style="left:36.6px;top:425px">    <span class="k">public</span> <span class="k">function</span> <span class="f">load</span>(<span class="v">$resource</span><span class="o">,</span> <span class="v">$type</span> = <span class="k">null</span>)</div>
<div class="code" style="left:36.6px;top:443px">    {</div>
<div class="code" style="left:36.6px;top:461px">        <span class="v">$collection</span> = <span class="k">parent</span>::<span class="f" style="font-style:italic">load</span>(<span class="v">$resource</span><span class="o">,</span> <span class="v">$type</span>)<span class="o">;</span></div>
<div class="a" style="left:171.5px;top:190px;width:2px;height:18px;background:#e8e8e8"></div>
</div>
<div class="a" style="left:1177px;top:76px;width:14px;height:14px;background:#b6b6b6"></div>
<div class="a" style="left:1182px;top:253px;width:10px;height:160px;border:1px solid #606060;border-radius:5px"></div>
<div class="a" style="left:1181px;top:427px;width:10px;height:3px;background:#aaa724;border-radius:1px"></div>
<div class="a" style="left:1181px;top:470px;width:10px;height:3px;background:#aaa724;border-radius:1px"></div>
<div class="a" style="left:435px;top:280px;width:600px;height:140px;background:#4f5153;overflow:hidden;box-shadow:2px 3px 6px rgba(0,0,0,0.45)">
<div class="a" style="left:0;top:20px;width:600px;height:20px;background:#0e61b0"></div>
<div class="a" style="left:1px;top:2px;width:17px;height:17px;border-radius:50%;background:#f4a99b;box-shadow:0 0 0 0.6px rgba(30,30,30,0.5);color:#665754;font-size:12.5px;line-height:16px;text-align:center;">m</div>
<svg style="left:22px;top:5px" width="12" height="11" viewBox="0 0 12 11"><path d="M1 4.5 V3.5 A2.6 2.6 0 0 1 6.2 3.5 V5" fill="none" stroke="#6cc072" stroke-width="1.5"/><rect x="2.3" y="4.2" width="9.2" height="6.8" rx="0.8" fill="#6cc072"/><path d="M5 6.2 H8.8 M6.9 6.2 V9.2" stroke="#2f5a34" stroke-width="1.3"/></svg>
<div class="pt" style="left:42.4px;top:2px"><span class="hl">s</span>etResolver<span class="gr" style="margin-left:4px">(resolver : \Symfony\Component\Config\Loader\Lo…</span></div>
<div class="pt" style="right:8px;top:2px">void</div>
<div class="a" style="left:1px;top:22px;width:17px;height:17px;border-radius:50%;background:#f4a99b;box-shadow:0 0 0 0.6px rgba(30,30,30,0.5);color:#665754;font-size:12.5px;line-height:16px;text-align:center;">m</div>
<svg style="left:22px;top:25px" width="12" height="11" viewBox="0 0 12 11"><path d="M1 4.5 V3.5 A2.6 2.6 0 0 1 6.2 3.5 V5" fill="none" stroke="#6cc072" stroke-width="1.5"/><rect x="2.3" y="4.2" width="9.2" height="6.8" rx="0.8" fill="#6cc072"/><path d="M5 6.2 H8.8 M6.9 6.2 V9.2" stroke="#2f5a34" stroke-width="1.3"/></svg>
<div class="pt" style="left:42.4px;top:22px"><span class="hl">s</span>upports<span style="margin-left:4px;color:#eaeaea">(resource : mixed, [type = null])</span></div>
<div class="pt" style="right:8px;top:22px">bool</div>
<div class="a" style="left:1px;top:42px;width:17px;height:17px;border-radius:50%;background:#f7c878;box-shadow:0 0 0 0.6px rgba(30,30,30,0.5);color:#5a5040;font-size:13px;line-height:16px;text-align:center;font-family:Liberation Serif;">f</div>
<svg style="left:23.5px;top:45px" width="10" height="14" viewBox="0 0 10 14"><rect x="0.9" y="0.9" width="8.2" height="5" rx="2" fill="#4f5153" stroke="#acacac" stroke-width="1.8"/><path d="M3 3.4 H7" stroke="#acacac" stroke-width="1"/><path d="M5 5.5 V13" stroke="#acacac" stroke-width="2.6"/><path d="M6 8.6 H8 M6 10.8 H7.6" stroke="#acacac" stroke-width="1.1"/></svg>
<div class="pt" style="left:42.4px;top:42px"><b>par<span class="hl">s</span>er</b><span style="margin-left:21px">Symfony\Bundle\FrameworkBundle\Controller\ControllerName…</span></div>
<div class="a" style="left:1px;top:62px;width:17px;height:17px;border-radius:50%;background:#f4a99b;box-shadow:0 0 0 0.6px rgba(30,30,30,0.5);color:#665754;font-size:12.5px;line-height:16px;text-align:center;">m</div>
<svg style="left:22px;top:65px" width="12" height="11" viewBox="0 0 12 11"><path d="M1 4.5 V3.5 A2.6 2.6 0 0 1 6.2 3.5 V5" fill="none" stroke="#6cc072" stroke-width="1.5"/><rect x="2.3" y="4.2" width="9.2" height="6.8" rx="0.8" fill="#6cc072"/><path d="M5 6.2 H8.8 M6.9 6.2 V9.2" stroke="#2f5a34" stroke-width="1.3"/></svg>
<div class="pt" style="left:42.4px;top:62px">getRe<span class="hl">s</span>olver<span style="margin-left:21px">Symfony\Component\Config\Loader\LoaderResolverInter…</span></div>
<div class="a" style="left:1px;top:82px;width:17px;height:17px;border-radius:50%;background:#f4a99b;box-shadow:0 0 0 0.6px rgba(30,30,30,0.5);color:#665754;font-size:12.5px;line-height:16px;text-align:center;">m</div>
<svg style="left:22px;top:85px" width="12" height="11" viewBox="0 0 12 11"><path d="M1 4.5 V3.5 A2.6 2.6 0 0 1 6.2 3.5 V5" fill="none" stroke="#6cc072" stroke-width="1.5"/><rect x="2.3" y="4.2" width="9.2" height="6.8" rx="0.8" fill="#6cc072"/><path d="M5 6.2 H8.8 M6.9 6.2 V9.2" stroke="#2f5a34" stroke-width="1.3"/></svg>
<div class="pt" style="left:42.4px;top:82px">re<span class="hl">s</span>olve<span class="gr" style="margin-left:4px">(resourc…</span><span style="margin-left:16px">Symfony\Component\Config\Loader\LoaderInterface</span></div>
<div class="a" style="left:1px;top:102px;width:17px;height:17px;border-radius:50%;background:#f7c878;box-shadow:0 0 0 0.6px rgba(30,30,30,0.5);color:#5a5040;font-size:13px;line-height:16px;text-align:center;font-family:Liberation Serif;">f</div>
<svg style="left:23.5px;top:105px" width="10" height="14" viewBox="0 0 10 14"><rect x="0.9" y="0.9" width="8.2" height="5" rx="2" fill="#4f5153" stroke="#acacac" stroke-width="1.8"/><path d="M3 3.4 H7" stroke="#acacac" stroke-width="1"/><path d="M5 5.5 V13" stroke="#acacac" stroke-width="2.6"/><path d="M6 8.6 H8 M6 10.8 H7.6" stroke="#acacac" stroke-width="1.1"/></svg>
<div class="pt" style="left:42.4px;top:102px">re<span class="hl">s</span>olver</div>
<svg style="left:2px;top:125.5px" width="9" height="6" viewBox="0 0 9 6"><path d="M0.8 5.2 L4.5 1.2 L8.2 5.2" fill="none" stroke="#d6d6d6" stroke-width="1.5"/></svg>
<svg style="left:13px;top:125.5px" width="7" height="11" viewBox="0 0 7 11"><path d="M3.5 0 V8" stroke="#d6d6d6" stroke-width="1.4"/><path d="M0.3 6.6 H6.7 L3.5 10.8 Z" fill="#d6d6d6"/></svg>
<div class="a" style="left:23.5px;top:122.8px;font-size:14px;letter-spacing:0.1px;color:#d6d6d6;white-space:pre;line-height:16px;-webkit-text-stroke:0.3px currentColor">and</div>
<svg style="left:52.5px;top:125.5px" width="9" height="6" viewBox="0 0 9 6"><path d="M0.8 5.2 L4.5 1.2 L8.2 5.2" fill="none" stroke="#d6d6d6" stroke-width="1.5"/></svg>
<svg style="left:63.5px;top:125px" width="7" height="11" viewBox="0 0 7 11"><path d="M3.5 3 V11" stroke="#d6d6d6" stroke-width="1.4"/><path d="M0.3 4.2 H6.7 L3.5 0 Z" fill="#d6d6d6"/></svg>
<div class="a" style="left:73.5px;top:122.8px;font-size:14px;letter-spacing:0.22px;color:#d6d6d6;white-space:pre;line-height:16px;-webkit-text-stroke:0.3px currentColor">will move caret down and up in the editor</div>
<div class="a" style="left:345px;top:122.3px;font-size:14px;letter-spacing:1.8px;color:#5aa2ea;white-space:pre;line-height:16px;text-decoration:underline">&gt;&gt;</div>
<div class="a" style="left:586px;top:120px;font-family:Liberation Serif;font-size:19px;color:#4aa3dc;line-height:16px">π</div>
</div>
</body></html>
